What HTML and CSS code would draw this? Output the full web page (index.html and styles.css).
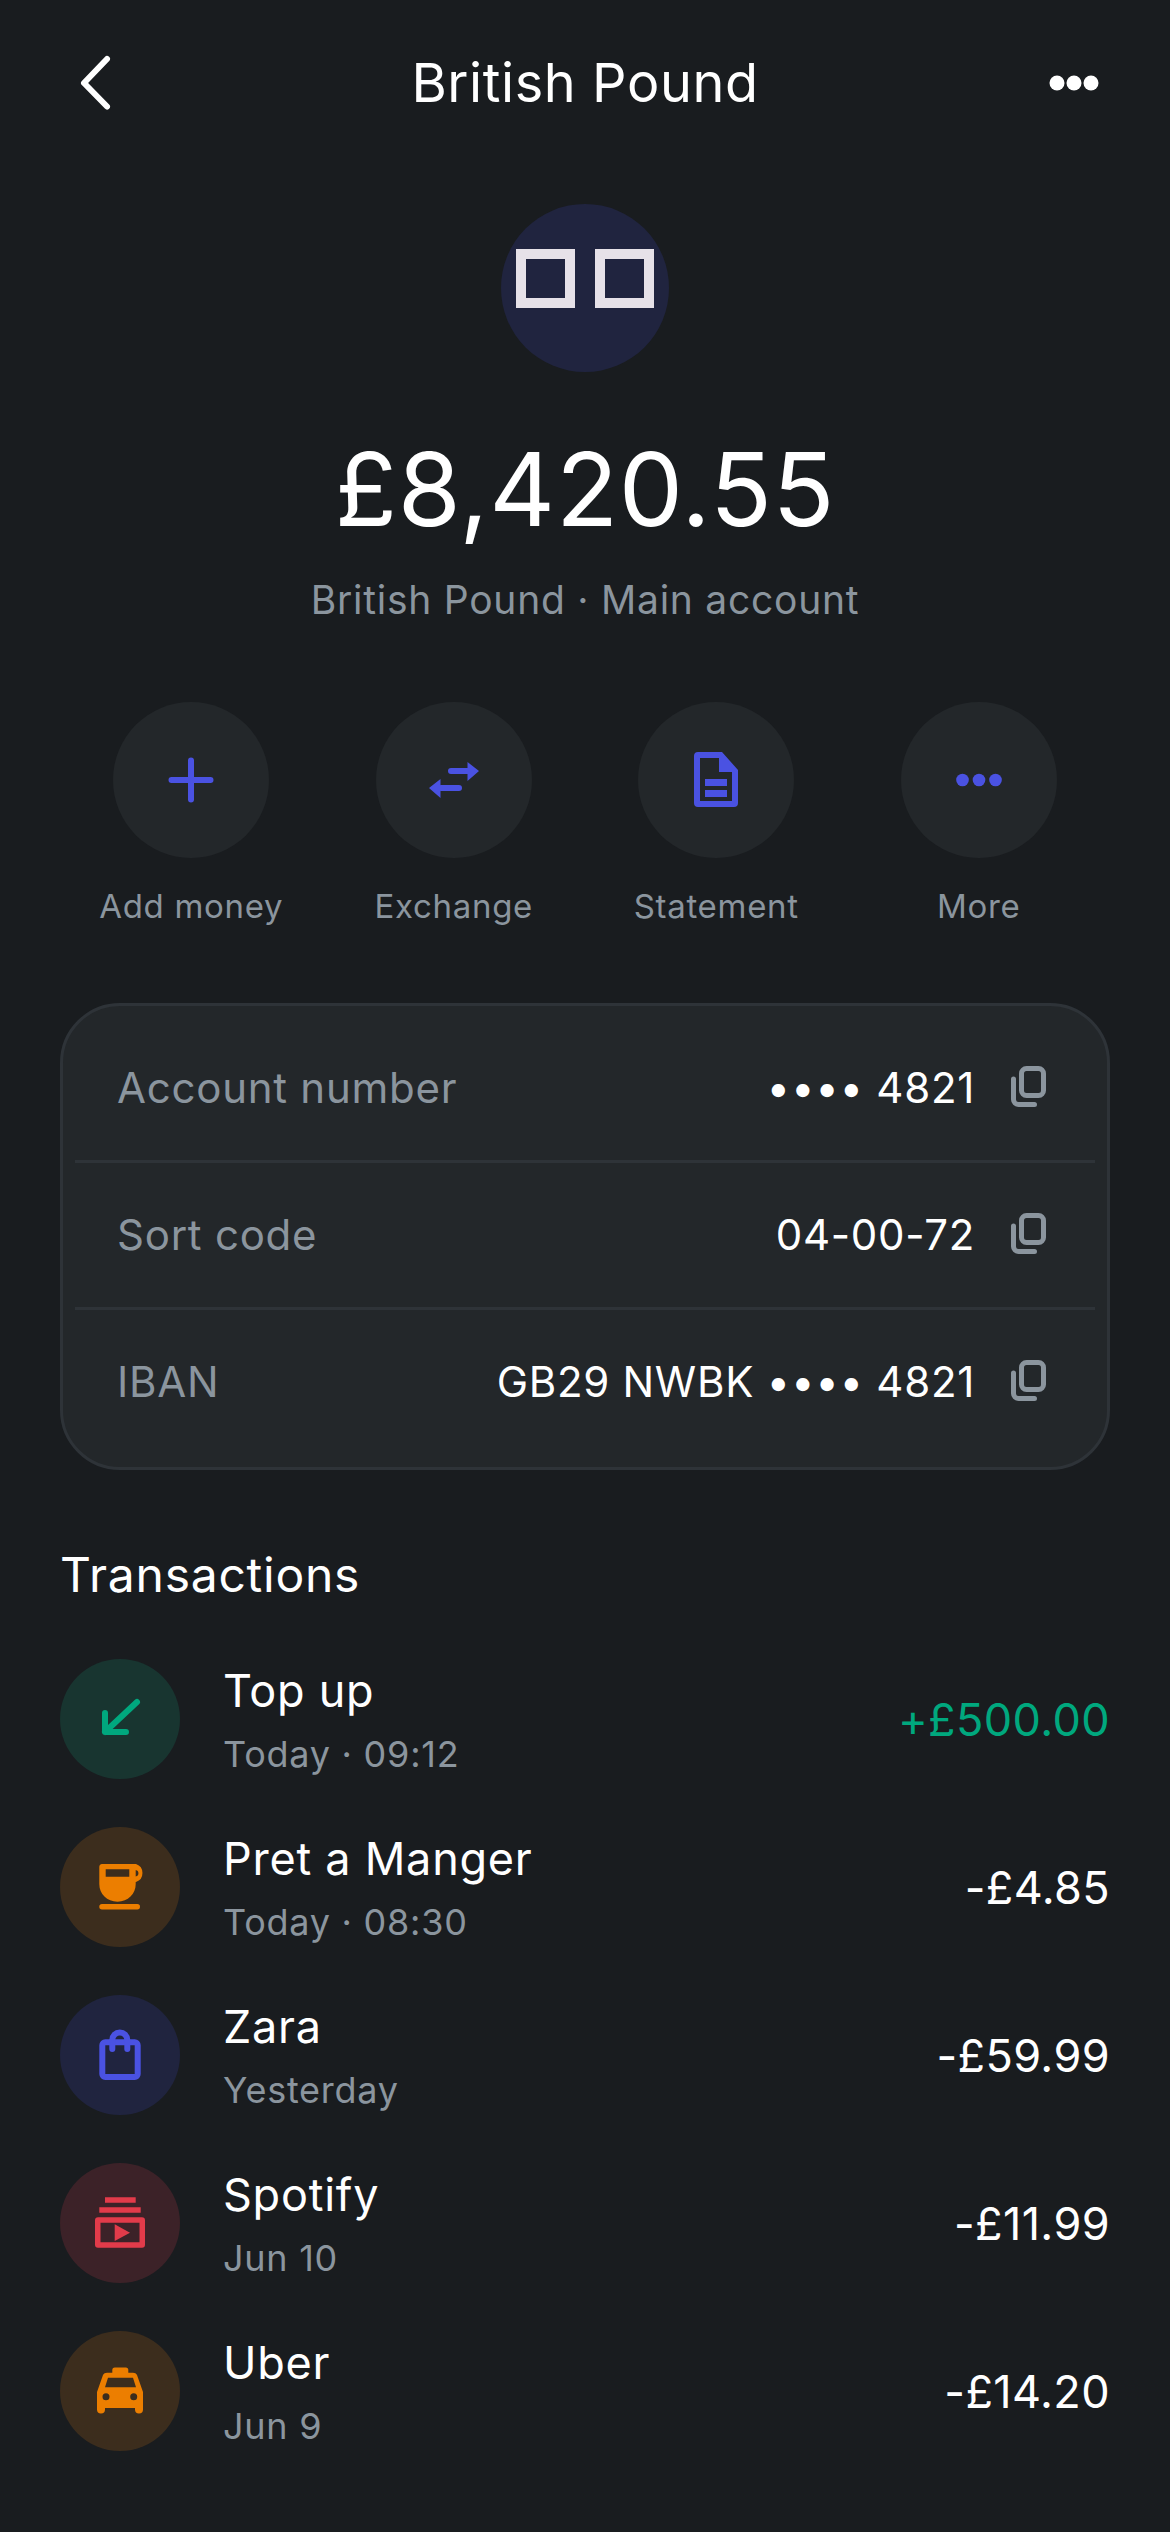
FILE: index.html
```html
<!DOCTYPE html>
<html lang="en">
<head>
<meta charset="utf-8">
<title>British Pound</title>
<link rel="stylesheet" href="styles.css">
</head>
<body>
<main class="screen">
  <header class="topbar">
    <svg class="icon72" viewBox="0 0 72 72"><path class="st white" d="M47 12 24 36 47 59.500"/></svg>
    <h1 class="title">British Pound</h1>
    <svg class="icon72" viewBox="0 0 72 72"><circle class="fill-white" cx="19" cy="36" r="7.500"/><circle class="fill-white" cx="36" cy="36" r="7.500"/><circle class="fill-white" cx="53" cy="36" r="7.500"/></svg>
  </header>

  <section class="hero">
    <div class="avatar"><span class="tofu"></span><span class="tofu"></span></div>
    <div class="balance">£8,420.55</div>
    <div class="subtitle">British Pound · Main account</div>
  </section>

  <nav class="actions">
    <div class="action">
      <div class="action-circle"><svg class="icon72" viewBox="0 0 72 72"><path class="st accent" d="M36 16.500v39M16.500 36h39"/></svg></div>
      <span class="action-label">Add money</span>
    </div>
    <div class="action">
      <div class="action-circle"><svg class="icon72" viewBox="0 0 72 72"><path class="st accent" d="M33 27h18M41 44H23"/><path class="fill-accent" d="M49.500 18 61 27 49.500 37ZM22.500 35 11 44 22.500 54Z"/></svg></div>
      <span class="action-label">Exchange</span>
    </div>
    <div class="action">
      <div class="action-circle"><svg class="icon72" viewBox="0 0 72 72"><path class="fill-accent" fill-rule="evenodd" d="M18 8H42L58 26V59a4 4 0 0 1-4 4H18a4 4 0 0 1-4-4V12a4 4 0 0 1 4-4ZM20 14V57H52V28H39V14ZM25 35H47V42H25ZM25 46H47V53H25Z"/></svg></div>
      <span class="action-label">Statement</span>
    </div>
    <div class="action">
      <div class="action-circle"><svg class="icon72" viewBox="0 0 72 72"><circle class="fill-accent" cx="19.500" cy="36" r="6.300"/><circle class="fill-accent" cx="36" cy="36" r="6.300"/><circle class="fill-accent" cx="52.500" cy="36" r="6.300"/></svg></div>
      <span class="action-label">More</span>
    </div>
  </nav>

  <section class="details">
    <div class="detail-row">
      <span class="detail-label">Account number</span>
      <span class="detail-value">•••• 4821</span>
      <svg class="icon72" viewBox="0 0 72 72"><rect class="copy-st" x="29.500" y="17.500" width="22" height="27" rx="5"/><path class="copy-st" d="M21.500 28V48.500a5 5 0 0 0 5 5H42.500"/></svg>
    </div>
    <div class="detail-row">
      <span class="detail-label">Sort code</span>
      <span class="detail-value">04-00-72</span>
      <svg class="icon72" viewBox="0 0 72 72"><rect class="copy-st" x="29.500" y="17.500" width="22" height="27" rx="5"/><path class="copy-st" d="M21.500 28V48.500a5 5 0 0 0 5 5H42.500"/></svg>
    </div>
    <div class="detail-row">
      <span class="detail-label">IBAN</span>
      <span class="detail-value">GB29 NWBK •••• 4821</span>
      <svg class="icon72" viewBox="0 0 72 72"><rect class="copy-st" x="29.500" y="17.500" width="22" height="27" rx="5"/><path class="copy-st" d="M21.500 28V48.500a5 5 0 0 0 5 5H42.500"/></svg>
    </div>
  </section>

  <h2 class="section-title">Transactions</h2>

  <section class="tx-list">
    <div class="tx">
      <div class="tx-icon tint-green"><svg class="icon72" viewBox="0 0 72 72"><path class="st green" d="M53 19 21 49M21 30V49H42"/></svg></div>
      <div class="tx-text"><span class="tx-name">Top up</span><span class="tx-meta">Today · 09:12</span></div>
      <span class="tx-amount positive">+£500.00</span>
    </div>
    <div class="tx">
      <div class="tx-icon tint-orange"><svg class="icon72" viewBox="0 0 72 72"><path class="fill-orange" fill-rule="evenodd" d="M18 13H52A9.500 9.500 0 0 1 52 31H51.700V33C51.700 43 44 50.700 33.500 50.700S15.300 43 15.300 33V16A3 3 0 0 1 18 13ZM21.700 18.300V25.700H45.300V18.300ZM51.700 19V25.500A3.300 3.300 0 0 0 51.700 19Z"/><rect class="fill-orange" x="15.300" y="53" width="40.700" height="5.500" rx="2.700"/></svg></div>
      <div class="tx-text"><span class="tx-name">Pret a Manger</span><span class="tx-meta">Today · 08:30</span></div>
      <span class="tx-amount">-£4.85</span>
    </div>
    <div class="tx">
      <div class="tx-icon tint-blue"><svg class="icon72" viewBox="0 0 72 72"><rect class="st accent" x="18.300" y="23.300" width="35.400" height="34.700" rx="3"/><path class="st accent" d="M28.300 30V21a7.500 7.500 0 0 1 15 0V30"/></svg></div>
      <div class="tx-text"><span class="tx-name">Zara</span><span class="tx-meta">Yesterday</span></div>
      <span class="tx-amount">-£59.99</span>
    </div>
    <div class="tx">
      <div class="tx-icon tint-red"><svg class="icon72" viewBox="0 0 72 72"><path class="fill-red" fill-rule="evenodd" d="M21 10.300H51.700V15.700H21ZM15.300 20.300H56.700V25.700H15.300ZM14 30.300H58a3 3 0 0 1 3 3V57.700a3 3 0 0 1-3 3H14a3 3 0 0 1-3-3V33.300a3 3 0 0 1 3-3ZM16.500 35.800V55.200H55.500V35.800ZM30.700 37.300 46 45.700 30.700 54Z"/></svg></div>
      <div class="tx-text"><span class="tx-name">Spotify</span><span class="tx-meta">Jun 10</span></div>
      <span class="tx-amount">-£11.99</span>
    </div>
    <div class="tx">
      <div class="tx-icon tint-orange"><svg class="icon72" viewBox="0 0 72 72"><path class="fill-orange" fill-rule="evenodd" d="M28.300 17.700V15A2.500 2.500 0 0 1 30.800 12.500H41.800A2.500 2.500 0 0 1 44.300 15V17.700H49C51 17.700 52 18.500 53 20L59 37V54.500A4 4 0 0 1 51 54.500V53H21V54.500A4 4 0 0 1 13 54.500V37L19 20C20 18.500 21 17.700 23 17.700ZM24 22.700 21 32.300H52L49 22.700ZM22 38.200A3.500 3.500 0 1 0 22 45.200 3.500 3.500 0 0 0 22 38.200ZM49.700 38.200A3.500 3.500 0 1 0 49.700 45.200 3.500 3.500 0 0 0 49.700 38.200Z"/></svg></div>
      <div class="tx-text"><span class="tx-name">Uber</span><span class="tx-meta">Jun 9</span></div>
      <span class="tx-amount">-£14.20</span>
    </div>
  </section>
</main>
</body>
</html>
```

FILE: styles.css
```css
* { box-sizing: border-box; margin: 0; padding: 0; }

html, body { background: #191c1f; }

body {
  width: 1170px;
  height: 2532px;
  overflow: hidden;
  color: #ffffff;
  font-family: "Inter", "Liberation Sans", sans-serif;
}

.screen { padding: 47px 60px 0; }

.icon72 { width: 72px; height: 72px; flex: none; display: block; }

.st { fill: none; stroke-width: 6; stroke-linecap: round; stroke-linejoin: round; }
.white { stroke: #ffffff; }
.accent { stroke: #4a52e2; }
.green { stroke: #00a87e; }
.fill-white { fill: #ffffff; }
.fill-accent { fill: #4a52e2; }
.fill-orange { fill: #ec7e00; }
.fill-red { fill: #e23b4a; }

.topbar { display: flex; align-items: center; justify-content: space-between; height: 72px; }
.title { font-size: 54px; font-weight: 400; line-height: 72px; letter-spacing: 0.6px; }

.hero { display: flex; flex-direction: column; align-items: center; margin-top: 85px; }

.avatar {
  width: 168px;
  height: 168px;
  border-radius: 50%;
  background: #20243f;
  display: flex;
  justify-content: center;
  align-items: flex-start;
  gap: 20px;
  padding-top: 45px;
}

.tofu { width: 59px; height: 59px; border: 10px solid #e6e1e8; }

.balance { font-size: 102px; font-weight: 400; line-height: 130px; letter-spacing: 0.7px; margin-top: 52px; }
.subtitle { font-size: 39px; line-height: 48px; letter-spacing: 0.75px; color: #8b959e; margin-top: 22px; }

.actions { display: grid; grid-template-columns: repeat(4, 1fr); justify-items: center; margin-top: 78px; }
.action { display: flex; flex-direction: column; align-items: center; width: 156px; }
.action-circle {
  width: 156px;
  height: 156px;
  border-radius: 50%;
  background: #23272a;
  display: flex;
  align-items: center;
  justify-content: center;
}
.action-label { font-size: 33px; line-height: 44px; letter-spacing: 0.7px; color: #8b959e; margin-top: 26px; white-space: nowrap; }

.details {
  margin-top: 75px;
  background: #23272a;
  border: 3px solid #2e3338;
  border-radius: 60px;
  padding: 10px 12px 13px;
}

.detail-row {
  display: flex;
  align-items: center;
  height: 147px;
  padding: 0 31px 2px 42px;
  border-bottom: 3px solid #2e3338;
}
.detail-row:last-child { border-bottom: 0; height: 144px; }

.detail-label { font-size: 42px; letter-spacing: 0.75px; color: #8b959e; flex: 1; }
.detail-value { font-size: 42px; font-weight: 400; letter-spacing: 0.7px; margin-right: 17px; }
.copy-st { fill: none; stroke: #8b959e; stroke-width: 5; stroke-linecap: round; }

.section-title { font-size: 48px; font-weight: 400; line-height: 60px; letter-spacing: 0.75px; margin-top: 75px; }

.tx-list { display: flex; flex-direction: column; gap: 48px; margin-top: 54px; }
.tx { display: flex; align-items: center; height: 120px; }
.tx-icon {
  width: 120px;
  height: 120px;
  border-radius: 50%;
  flex: none;
  display: flex;
  align-items: center;
  justify-content: center;
}
.tint-green { background: #183530; }
.tint-orange { background: #3c2d1d; }
.tint-blue { background: #20243f; }
.tint-red { background: #3c2228; }

.tx-text { display: flex; flex-direction: column; flex: 1; margin-left: 43px; }
.tx-name { font-size: 45px; font-weight: 400; line-height: 60px; letter-spacing: 0.75px; }
.tx-meta { font-size: 36px; line-height: 48px; letter-spacing: 0.75px; color: #8b959e; margin-top: 9px; }
.tx-amount { font-size: 45px; font-weight: 400; letter-spacing: 0.4px; }
.positive { color: #00a87e; }
```
